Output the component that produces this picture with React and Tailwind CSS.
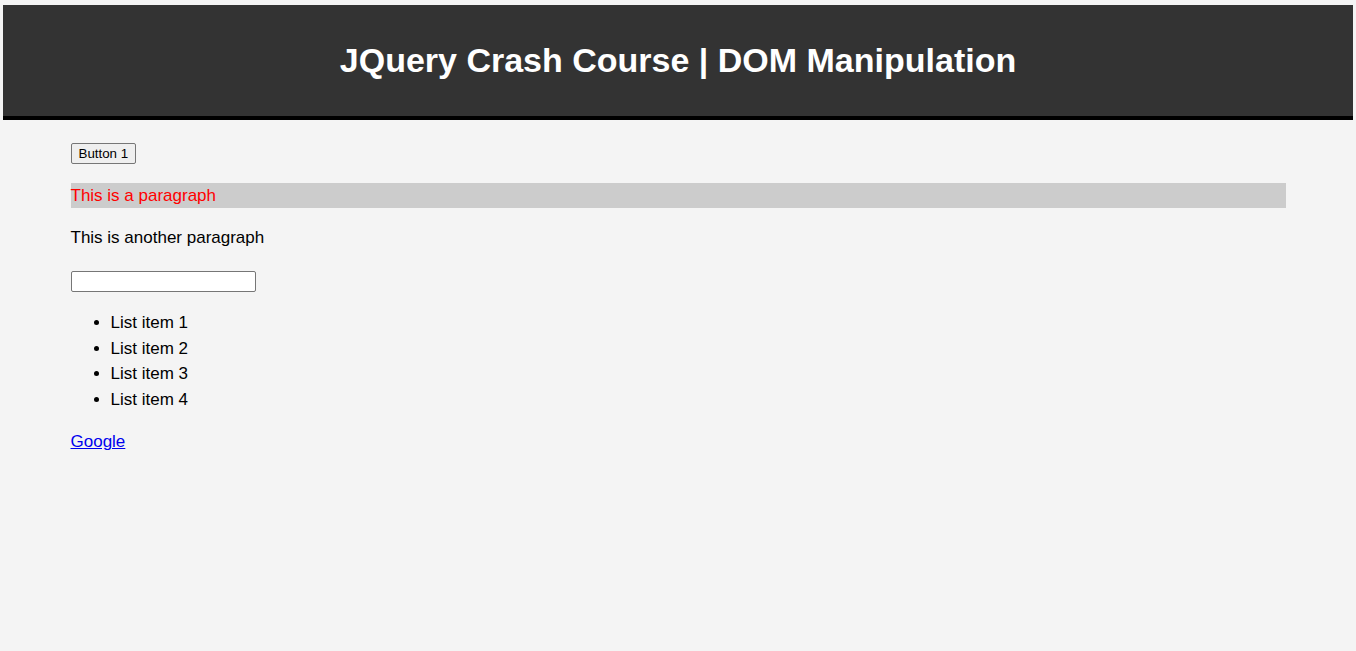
export default function App() {
  return (
    <div className="min-h-[651px] bg-[#f4f4f4] pt-[5px] px-[3px] text-black" style={{ fontFamily: '"Liberation Sans", Arial, sans-serif' }}>
      <header className="h-[115px] bg-[#333333] border-b-[4px] border-black flex items-center justify-center pb-[1px]">
        <h1 className="text-white font-bold text-[34px] leading-none">JQuery Crash Course | DOM Manipulation</h1>
      </header>
      <div className="w-[90%] mx-auto pt-[20px] text-[17px] leading-[25.5px]">
        <div className="h-[25.5px] pt-[3px]">
          <button className="block h-[21px] px-[7px] border border-[#767676] rounded-[2px] bg-[#efefef] text-[13.33px] leading-none text-black">
            Button 1
          </button>
        </div>
        <p className="mt-[17px] bg-[#cccccc] text-[#ff0000]">This is a paragraph</p>
        <p className="mt-[17px]">This is another paragraph</p>
        <div className="mt-[17px] h-[25.5px] pt-[3px]">
          <input type="text" className="block w-[185px] h-[21px] border border-[#767676] bg-white rounded-[2px] px-[2px] text-[13.33px]" />
        </div>
        <ul className="mt-[17px] pl-[40px] list-disc">
          <li>List item 1</li>
          <li>List item 2</li>
          <li>List item 3</li>
          <li>List item 4</li>
        </ul>
        <p className="mt-[17px]">
          <a href="#" className="text-[#0000ee] underline">Google</a>
        </p>
      </div>
    </div>
  );
}
